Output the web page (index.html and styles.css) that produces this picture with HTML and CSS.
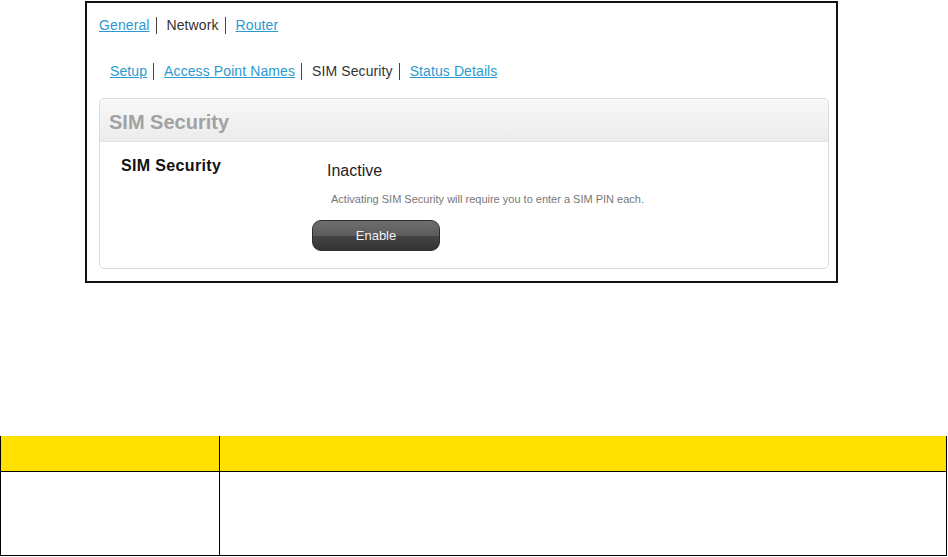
FILE: index.html
```html
<!DOCTYPE html>
<html>
<head>
<meta charset="utf-8">
<link rel="stylesheet" href="styles.css">
</head>
<body>
<div class="frame">
  <nav class="tabs tabs-main">
    <a class="tab link">General</a><span class="sep"></span>
    <span class="tab current">Network</span><span class="sep"></span>
    <a class="tab link">Router</a>
  </nav>
  <nav class="tabs tabs-sub">
    <a class="tab link">Setup</a><span class="sep"></span>
    <a class="tab link">Access Point Names</a><span class="sep"></span>
    <span class="tab current">SIM Security</span><span class="sep"></span>
    <a class="tab link">Status Details</a>
  </nav>
  <section class="panel">
    <header class="panel-head">SIM Security</header>
    <div class="panel-body">
      <div class="label">SIM Security</div>
      <div class="value">
        <div class="status">Inactive</div>
        <p class="desc">Activating SIM Security will require you to enter a SIM PIN each.</p>
        <button class="btn">Enable</button>
      </div>
    </div>
  </section>
</div>

<table class="grid">
  <thead>
    <tr><th class="c1"></th><th class="c2"></th></tr>
  </thead>
  <tbody>
    <tr><td class="c1"></td><td class="c2"></td></tr>
  </tbody>
</table>
</body>
</html>
```

FILE: styles.css
```css
html, body {
  margin: 0;
  padding: 0;
  background: #fff;
  font-family: "Liberation Sans", Arial, sans-serif;
}

.frame {
  box-sizing: border-box;
  width: 753px;
  height: 282px;
  margin: 1px 0 0 85px;
  border: 2px solid #111;
  padding: 14px 7px 0 12px;
}

.tabs {
  display: flex;
  align-items: center;
  font-size: 14px;
  line-height: 17px;
}

.tabs-main {
  padding-left: 0;
}

.tabs-sub {
  margin-top: 29px;
  padding-left: 11px;
}

.tab {
  color: #333;
  letter-spacing: 0.1px;
}

.link {
  color: #2b9ad0;
  text-decoration: underline;
}

.sep {
  display: inline-block;
  width: 0;
  height: 17px;
  border-left: 1px solid #444;
  margin: 0 10px 0 6px;
}

.panel {
  margin-top: 18px;
  width: 730px;
  box-sizing: border-box;
  height: 171px;
  border: 1px solid #dcdcdc;
  border-radius: 5px;
  overflow: hidden;
}

.panel-head {
  height: 43px;
  box-sizing: border-box;
  padding: 11px 0 0 9px;
  background: linear-gradient(#f8f8f8, #ececec);
  border-bottom: 1px solid #e4e4e4;
  color: #a2a2a2;
  font-weight: bold;
  font-size: 20px;
  line-height: 24px;
}

.panel-body {
  display: grid;
  grid-template-columns: 191px 1fr;
  padding: 14px 0 0 21px;
}

.label {
  font-weight: bold;
  font-size: 16px;
  line-height: 19px;
  letter-spacing: 0.35px;
  color: #111;
}

.status {
  margin: 5px 0 0 15px;
  font-size: 16px;
  line-height: 19px;
  color: #222;
}

.desc {
  margin: 12px 0 0 19px;
  font-size: 11px;
  line-height: 14px;
  color: #777;
}

.btn {
  display: block;
  margin-top: 14px;
  width: 128px;
  height: 31px;
  border: 1px solid #2e2e2e;
  border-radius: 9px;
  background: linear-gradient(#6e6e6e 0%, #5c5c5c 50%, #444 52%, #333 100%);
  color: #f0f0f0;
  font-family: "Liberation Sans", Arial, sans-serif;
  font-size: 13px;
  padding: 0;
}

.grid {
  margin-top: 153px;
  width: 947px;
  border-collapse: collapse;
}

.grid th {
  height: 35px;
  padding: 0;
  background: #ffe000;
  border-bottom: 1px solid #000;
}

.grid th.c1 {
  border-left: 1px solid #000;
  border-right: 1px solid #000;
}

.grid th.c2 {
  border-right: 1px solid #000;
}

.grid td {
  height: 83px;
  padding: 0;
  border: 1px solid #000;
  border-top: none;
}

.grid .c1 {
  width: 218px;
}
```
